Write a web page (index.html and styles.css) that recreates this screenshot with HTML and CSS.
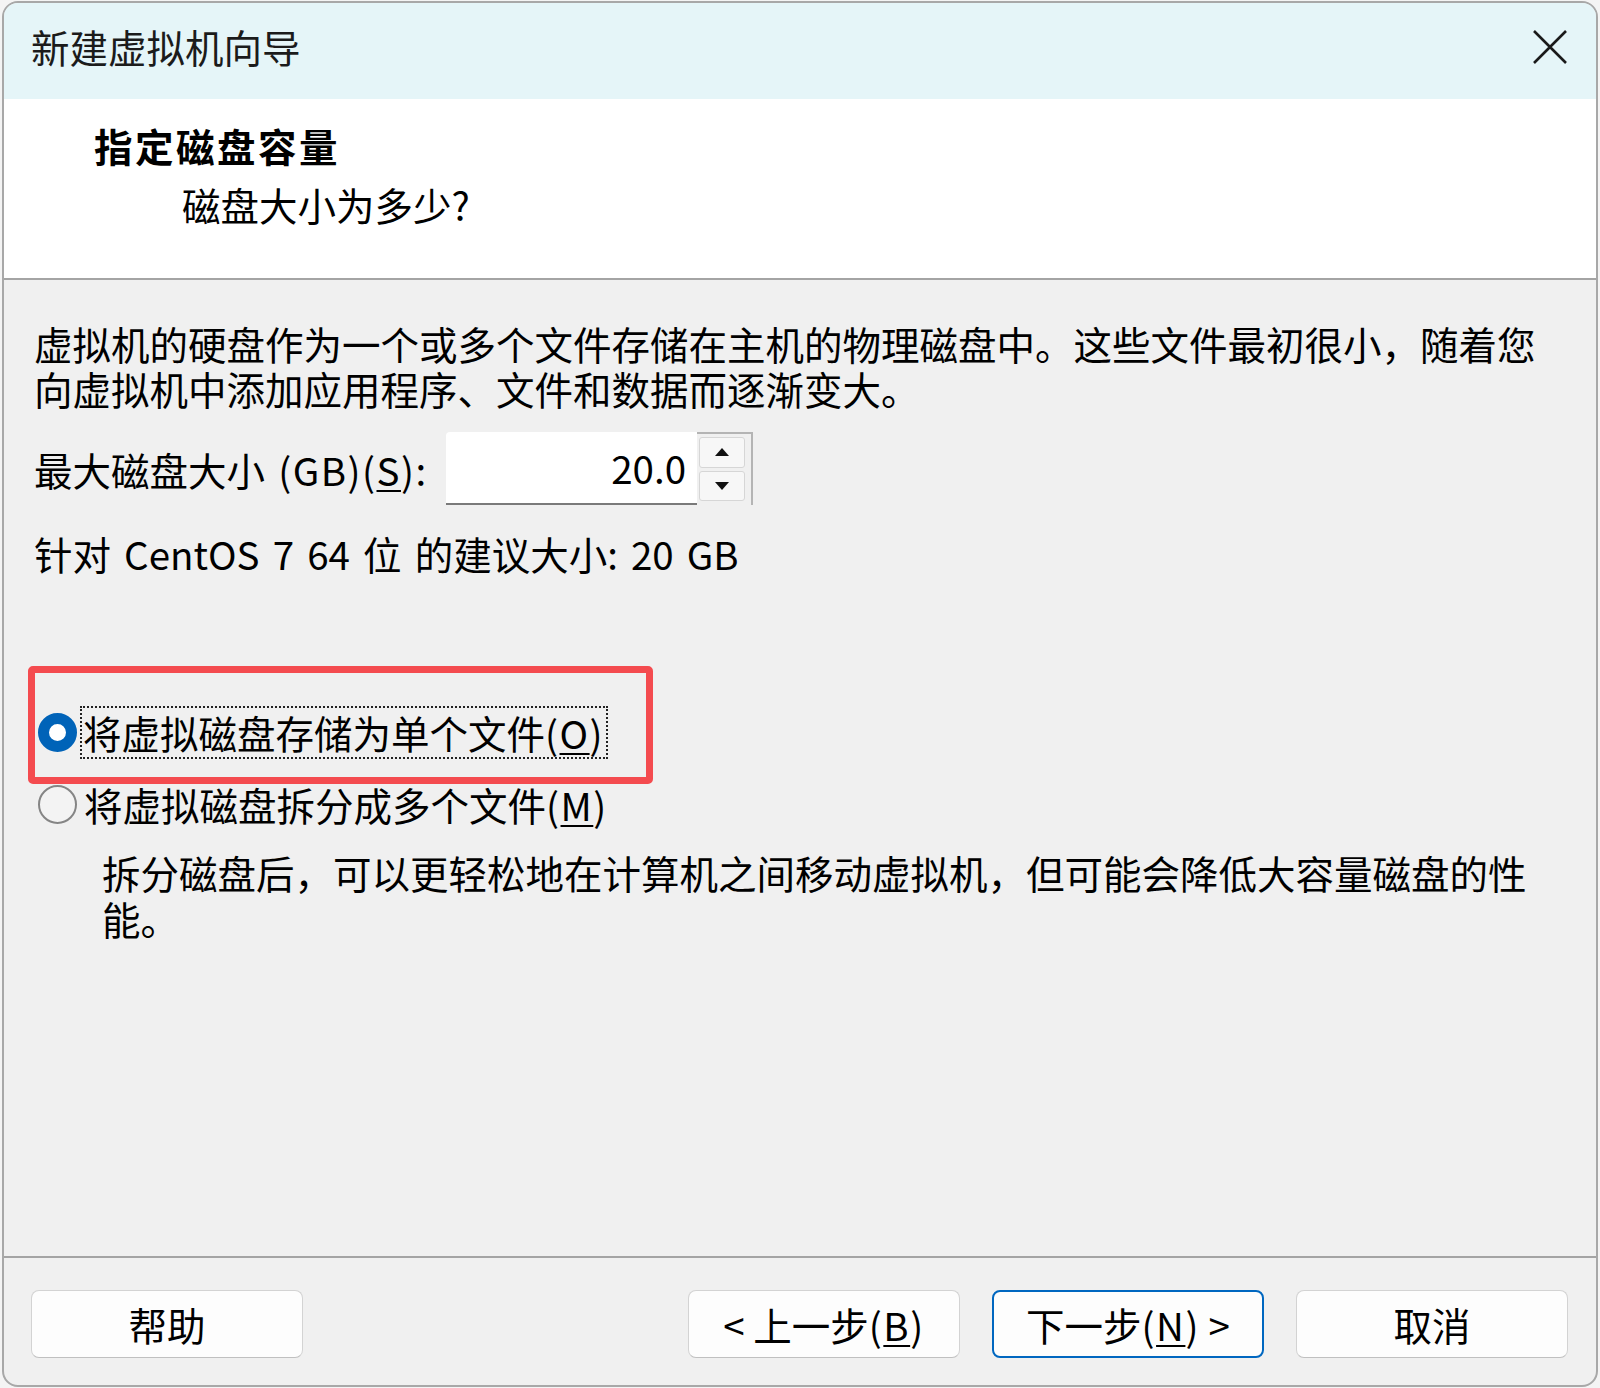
FILE: index.html
```html
<!DOCTYPE html>
<html lang="zh-CN">
<head>
<meta charset="utf-8">
<title>新建虚拟机向导</title>
<link rel="stylesheet" href="styles.css">
</head>
<body>
<div class="window">
  <div class="titlebar">
    <span class="title">新建虚拟机向导</span>
    <svg class="close" width="36" height="36" viewBox="0 0 36 36"><path d="M2 2 L34 34 M34 2 L2 34" stroke="#1a1a1a" stroke-width="2.6" fill="none"/></svg>
  </div>
  <div class="header">
    <div class="h-title">指定磁盘容量</div>
    <div class="h-sub">磁盘大小为多少?</div>
  </div>
  <div class="content">
    <div class="para">
      <span class="ln">虚拟机的硬盘作为一个或多个文件存储在主机的物理磁盘中。这些文件最初很小，随着您</span>
      <span class="ln">向虚拟机中添加应用程序、文件和数据而逐渐变大。</span>
    </div>
    <div class="size-row">
      <span class="label">最大磁盘大小 <span class="lat">(GB)(<u>S</u>):</span></span>
      <div class="spin">
        <div class="spin-field">20.0</div>
        <div class="spin-btns">
          <div class="spin-btn"><svg width="16" height="10" viewBox="0 0 16 10"><path d="M8 1 L15 9 L1 9 Z" fill="#111"/></svg></div>
          <div class="spin-btn"><svg width="16" height="10" viewBox="0 0 16 10"><path d="M1 1 L15 1 L8 9 Z" fill="#111"/></svg></div>
        </div>
      </div>
    </div>
    <div class="hint">针对 CentOS 7 64 位 的建议大小: 20 GB</div>
    <div class="options">
      <div class="opt">
        <span class="radio checked"></span>
        <span class="opt-text focus">将虚拟磁盘存储为单个文件<span class="lat">(<u>O</u>)</span></span>
      </div>
      <div class="opt">
        <span class="radio"></span>
        <span class="opt-text">将虚拟磁盘拆分成多个文件<span class="lat">(<u>M</u>)</span></span>
      </div>
      <div class="desc">
        <span class="ln">拆分磁盘后，可以更轻松地在计算机之间移动虚拟机，但可能会降低大容量磁盘的性</span>
        <span class="ln">能。</span>
      </div>
    </div>
  </div>
  <div class="footer">
    <button class="btn">帮助</button>
    <span class="spacer"></span>
    <button class="btn">&lt; 上一步<span class="lat">(<u>B</u>)</span></button>
    <button class="btn primary">下一步<span class="lat">(<u>N</u>)</span> &gt;</button>
    <button class="btn">取消</button>
  </div>
  <div class="annot"></div>
</div>
</body>
</html>
```
FILE: styles.css
```css
* { box-sizing: border-box; }
html, body { margin: 0; }
body {
  padding: 1px 2px;
  background: #f4f4f4;
  font-family: "Microsoft YaHei UI", "Noto Sans CJK SC", "Noto Sans", sans-serif;
  font-size: 38.5px;
  color: #000;
  word-spacing: 4.5px;
}
.window {
  position: relative;
  width: 1596px;
  height: 1386px;
  border: 2px solid #a8a8a8;
  border-radius: 16px;
  overflow: hidden;
  display: flex;
  flex-direction: column;
  background: #f0f0f0;
}
.titlebar {
  height: 96px;
  flex: none;
  background: #e5f5f8;
  display: flex;
  align-items: center;
  justify-content: space-between;
  padding: 0 28px 10px 27px;
}
.title { color: #1b1b1b; line-height: 50px; white-space: nowrap; }
.close { display: block; margin-top: 2px; }
.header {
  height: 181px;
  flex: none;
  background: #fff;
  border-bottom: 2px solid #a4a4a4;
  padding-top: 21px;
}
.h-title { font-weight: 700; line-height: 50px; margin-left: 90px; letter-spacing: 2.5px; }
.h-sub { line-height: 50px; margin-left: 178px; margin-top: 9px; }
.content {
  flex: 1;
  padding: 41px 30px 0 30px;
}
.para { display: flex; flex-direction: column; }
.ln { display: block; height: 45px; line-height: 45px; white-space: nowrap; }
.lat { letter-spacing: 1.5px; }
.size-row {
  display: flex;
  align-items: center;
  margin-top: 21px;
  height: 73px;
}
.label { width: 412px; white-space: nowrap; }
.spin {
  display: flex;
  height: 73px;
}
.spin-field {
  width: 251px;
  background: #fff;
  border-bottom: 2px solid #7a7a7a;
  border-radius: 4px 0 0 0;
  text-align: right;
  padding-right: 11px;
  line-height: 70px;
}
.spin-btns {
  width: 56px;
  border-top: 2px solid #b4b4b4;
  border-right: 2px solid #b4b4b4;
  background: #f0f0f0;
  padding: 3px 6px 4px 2px;
  display: flex;
  flex-direction: column;
  gap: 3px;
}
.spin-btn {
  flex: 1;
  border: 1.5px solid #d6d6d6;
  border-radius: 3px;
  background: #f7f7f7;
  display: flex;
  align-items: center;
  justify-content: center;
}
.spin-btn svg { display: block; }
.hint { margin-top: 25px; line-height: 46px; white-space: nowrap; }
.options { margin-top: 120px; }
.opt {
  display: flex;
  align-items: center;
  height: 72px;
  padding-left: 4px;
}
.radio {
  width: 39px;
  height: 39px;
  border-radius: 50%;
  border: 2.5px solid #858585;
  background: #f3f3f3;
  flex: none;
}
.radio.checked {
  border: 11px solid #0063b8;
  background: #fff;
}
.opt-text { margin-left: 7px; line-height: 46px; white-space: nowrap; }
.opt-text.focus { outline: 2px dotted #222; outline-offset: 0; padding: 1px 2px 2px 1px; margin-left: 5px; }
.desc {
  display: flex;
  flex-direction: column;
  margin-top: 9px;
  padding-left: 68px;
}
.desc .ln { height: 46px; line-height: 46px; }
.footer {
  flex: none;
  border-top: 2px solid #a4a4a4;
  padding: 32px 28px 27px 27px;
  display: flex;
  align-items: center;
}
.spacer { flex: 1; }
.btn {
  width: 272px;
  height: 68px;
  font: inherit;
  color: #000;
  background: #fdfdfd;
  border: 1.5px solid #d3d3d3;
  border-bottom-color: #c0c0c0;
  border-radius: 8px;
  padding: 0;
  line-height: 64px;
  margin-left: 32px;
  white-space: nowrap;
}
.btn:first-child { margin-left: 0; }
.spacer + .btn { margin-left: 0; }
.btn.primary { border: 2.5px solid #0067c0; }
u { text-underline-offset: 4px; text-decoration-thickness: 2px; }
.annot {
  position: absolute;
  left: 24px;
  top: 663px;
  width: 625px;
  height: 118px;
  border: 7px solid #f44b4f;
  border-radius: 5px;
  pointer-events: none;
}
```
